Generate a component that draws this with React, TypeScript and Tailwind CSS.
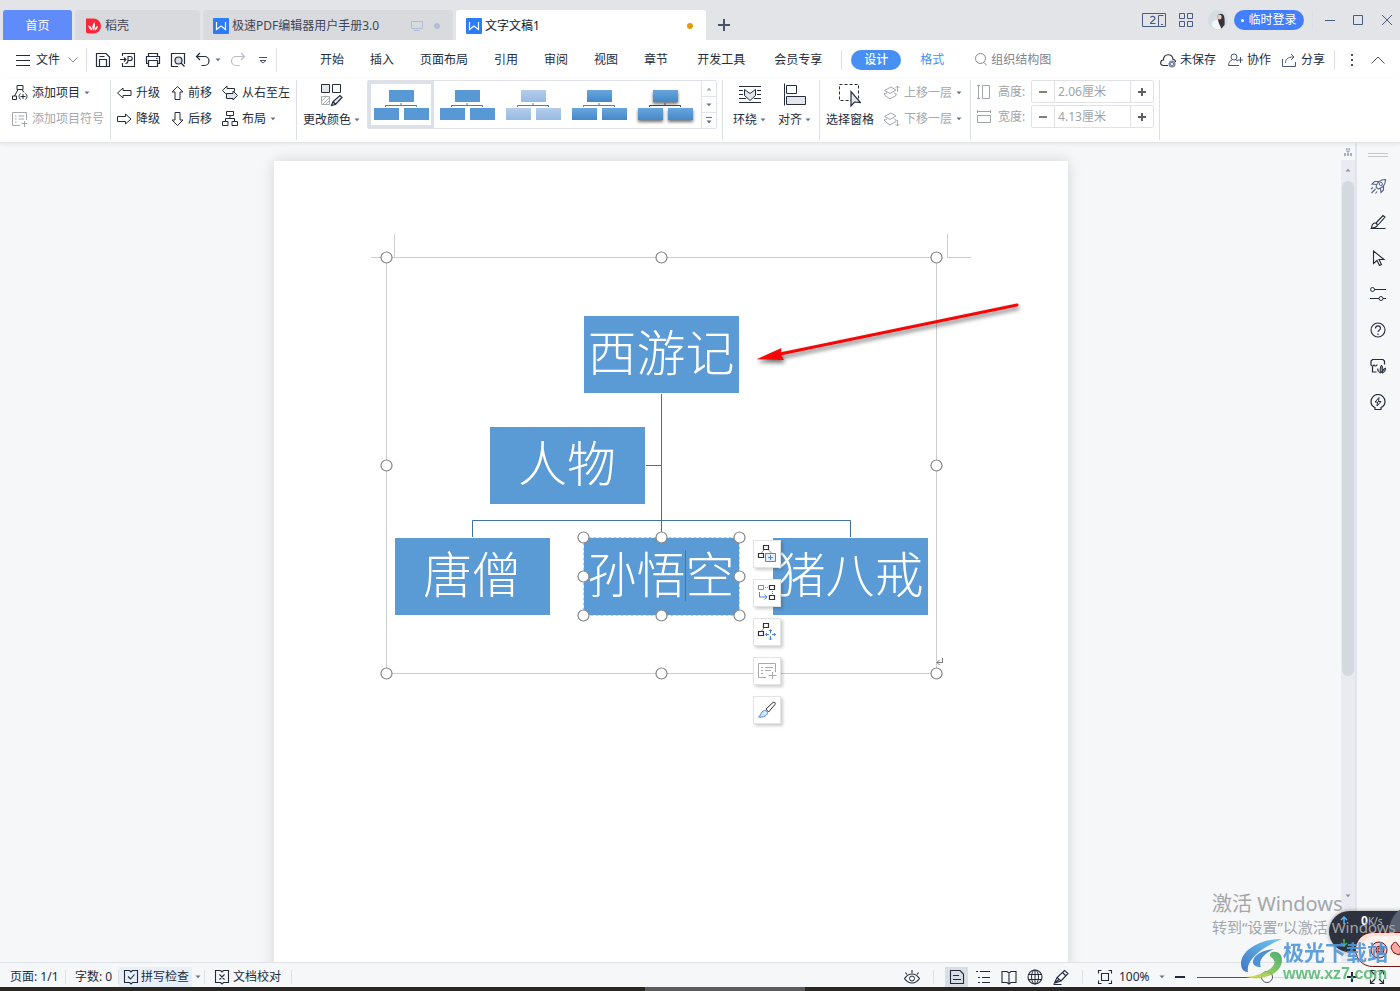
import { useState } from "react"
import type { ReactNode } from "react"

interface SvgProps {
  w?: number
  h?: number
  className?: string
  children: ReactNode
}

function Svg({ w = 16, h = 16, className = "", children }: SvgProps) {
  return (
    <svg width={w} height={h} viewBox={`0 0 ${w} ${h}`} fill="none" stroke="currentColor" className={`shrink-0 ${className}`} aria-hidden="true">
      {children}
    </svg>
  )
}

function Caret({ className = "text-[#66708a]" }: { className?: string }) {
  return (
    <Svg w={6} h={4} className={className}>
      <path d="M0.5 0.5h5L3 3.3z" fill="currentColor" stroke="none" />
    </Svg>
  )
}

function Divider({ className = "h-5" }: { className?: string }) {
  return <div className={`w-px shrink-0 bg-[#dcdfe6] ${className}`} />
}

function WriterLogo() {
  return (
    <Svg className="text-white">
      <rect width="16" height="16" rx="1" fill="#2b7cf6" stroke="none" />
      <path d="M3.500 4v7.500l4.500-3.500 4.500 3.500V4" strokeWidth="1.200" />
    </Svg>
  )
}

/* ---------- title bar ---------- */

function TitleBar() {
  return (
    <header className="flex h-10 shrink-0 items-center bg-[#e2e4e8] pl-[3px] pr-2">
      <div className="flex h-full items-end gap-[3px]">
        <button className="h-[30px] w-[69px] rounded-t-[3px] bg-[#5f8cfa] pt-[2px] text-white">首页</button>
        <button className="flex h-[30px] w-[125px] items-center gap-1 rounded-t-[3px] bg-[#d9dade] pl-[10px] pt-[2px] text-[#3e4656]">
          <Svg>
            <path d="M1 0.5h7.5a7.5 7.5 0 0 1 0 15H3a2 2 0 0 1-2-2z" fill="#fb2638" stroke="none" />
            <path d="M8.500 12.500c-2-2.500-1.500-5.500.8-8.500 1.200 3 1 6-.8 8.500zM7.300 12.500C5 12 3.500 10 3.400 7.300c2.100.700 3.600 2.500 3.900 5.200zM9.600 12.500c.2-2.300 1.300-4 3.200-4.700.1 2.400-1.100 4.300-3.200 4.700z" fill="#fff" stroke="none" />
          </Svg>
          稻壳
        </button>
        <button className="flex h-[30px] w-[250px] items-center gap-[3px] rounded-t-[3px] bg-[#d9dade] pl-[10px] pr-[13px] pt-[2px] text-[#3e4656]">
          <WriterLogo />
          <span className="mr-auto">极速PDF编辑器用户手册3.0</span>
          <Svg w={12} h={12} className="mr-2 text-[#b3bdd4]">
            <path d="M0.500 1.500h11v7h-11zM6 8.500v2M3 10.500h6" />
          </Svg>
          <span className="size-[6px] rounded-full bg-[#b3bdd4]" />
        </button>
        <button className="flex h-[30px] w-[250px] items-center gap-[3px] rounded-t-[3px] bg-white pl-[10px] pr-[13px] pt-[2px] text-[#111827]">
          <WriterLogo />
          <span className="mr-auto">文字文稿1</span>
          <span className="size-[6px] rounded-full bg-[#e59a0c]" />
        </button>
      </div>
      <button aria-label="新建" className="ml-3 mt-[10px] text-[#4a5468]">
        <Svg w={12} h={12}>
          <path d="M6 0v12M0 6h12" strokeWidth="2" />
        </Svg>
      </button>

      <div className="ml-auto flex items-center text-[#4b5c82]">
        <button aria-label="窗口布局">
          <Svg w={24} h={14}>
            <path d="M0.500 0.500h23v13h-23zM16.500 13.500v-11h5M19 11.500h2" />
            <path d="M8.500 4.500c.5-1.700 4.500-1.700 4.500.700 0 2-4.500 3.600-4.500 5.300h5" strokeWidth="1.200" />
          </Svg>
        </button>
        <button aria-label="应用" className="ml-[13px]">
          <Svg w={14} h={14}>
            <path d="M0.500 0.500h5v5h-5zM8.500 0.500h5v5h-5zM0.500 8.500h5v5h-5zM8.500 8.500h5v5h-5z" />
          </Svg>
        </button>
        <Svg w={20} h={20} className="ml-[15px]">
          <circle cx="10" cy="10" r="10" fill="#d3dde2" stroke="none" />
          <path d="M9.500 6c1-3 5.500-3 6.500 0 .800 3 .700 6 .500 9l-3 3.500-3-6z" fill="#3a3238" stroke="none" />
          <ellipse cx="11.500" cy="7" rx="2.200" ry="2.600" fill="#e9cbbd" stroke="none" />
          <path d="M3.500 14c1-3 3.500-4.500 6-4l3 8.200c-3 2-7.500 1-9-4.200z" fill="#f4f8f8" stroke="none" />
        </Svg>
        <button className="ml-[6px] flex h-5 w-[70px] items-center justify-center gap-1 rounded-full bg-[#437ffa] text-white">
          <span className="size-[3px] rounded-full bg-white" />
          临时登录
        </button>
        <Divider className="ml-2 h-5 bg-[#c5c9d1]" />
        <button aria-label="最小化" className="ml-3">
          <Svg w={10} h={10}><path d="M0 5.500h10" /></Svg>
        </button>
        <button aria-label="最大化" className="ml-[18px]">
          <Svg w={10} h={10}><path d="M0.500 0.500h9v9h-9z" /></Svg>
        </button>
        <button aria-label="关闭" className="ml-[19px]">
          <Svg w={10} h={10}><path d="M0 0l10 10M10 0L0 10" /></Svg>
        </button>
      </div>
    </header>
  )
}

/* ---------- menu row ---------- */

const mainMenus = ["开始", "插入", "页面布局", "引用", "审阅", "视图", "章节"]

function MenuRow() {
  return (
    <div className="flex h-[39px] shrink-0 items-center bg-white pl-4 pr-[15px] whitespace-nowrap">
      <button className="flex items-center gap-[6px]">
        <Svg w={14} h={12}><path d="M0 1.500h14M0 6.500h14M0 11.500h14" /></Svg>
        文件
        <Svg w={10} h={6} className="ml-[2px] text-[#8a90a0]"><path d="M0.500 0.500L5 5l4.500-4.500" /></Svg>
      </button>
      <Divider className="ml-2 h-6" />
      <div className="ml-2 flex items-center gap-[9px]">
        <button aria-label="保存">
          <Svg><path d="M1.500 1.500h9.500l3.500 3.500v9.500h-13zM4.500 14v-6.500h7V14M4.500 4.500h5" strokeWidth="1.200" /></Svg>
        </button>
        <button aria-label="输出为PDF">
          <Svg><path d="M2.500 4V1.500h12v13h-12V11M0 7.500h6M4 5.500l2 2-2 2M5.500 11.500c1.500 0 2.500-1 2.500-3V4.500h2c3 0 3 4 0 4H8" strokeWidth="1.100" /></Svg>
        </button>
        <button aria-label="打印">
          <Svg><path d="M3.500 4.500v-3h9v3M3.500 11.500h-2v-7h13v7h-2M3.500 8.500h9v6h-9zM11 6.500h1.500" strokeWidth="1.200" /></Svg>
        </button>
        <button aria-label="打印预览">
          <Svg>
            <path d="M8 14.500H1.500v-13h13V12" strokeWidth="1.200" />
            <circle cx="8.500" cy="8.500" r="3.500" fill="#d9dce3" strokeWidth="1.200" />
            <path d="M11 11l3.500 3.500" strokeWidth="1.200" />
          </Svg>
        </button>
        <button aria-label="撤销" className="flex items-center gap-1">
          <Svg><path d="M5 1L1.500 4.500 5 8M1.500 4.500H9.500a4.500 4.500 0 0 1 0 9H6.500" strokeWidth="1.200" /></Svg>
          <Caret />
        </button>
        <button aria-label="恢复" className="text-[#b9bdc6]">
          <Svg><path d="M11 1l3.500 3.500L11 8M14.500 4.500H6a4.500 4.500 0 0 0 0 9H9.500" strokeWidth="1.200" /></Svg>
        </button>
        <button aria-label="自定义" className="ml-1 text-[#4d5466]">
          <Svg w={8} h={8}><path d="M0 1.500h8M1 4.500h6L4 7z" /></Svg>
        </button>
      </div>
      <Divider className="ml-[9px] h-6" />

      <nav className="ml-[43px] flex items-center gap-[29px]">
        <div className="flex gap-[26px]">
          {mainMenus.map((name) => (
            <button key={name}>{name}</button>
          ))}
        </div>
        <button>开发工具</button>
        <button>会员专享</button>
      </nav>
      <Divider className="ml-[19px] h-5" />
      <button className="ml-[9px] h-5 w-[50px] rounded-full bg-[#478ef5] font-medium text-white">设计</button>
      <button className="ml-[19px] text-[#478ef5]">格式</button>
      <label className="ml-[31px] flex items-center gap-1 text-[#8089a0]">
        <Svg w={12} h={13}><circle cx="5.500" cy="5.500" r="5" /><path d="M9 9.500l3 3" /></Svg>
        <input aria-label="搜索命令" defaultValue="组织结构图" className="w-20 bg-transparent text-[#7d8594] outline-none" />
      </label>

      <div className="ml-auto flex items-center">
        <button className="flex items-center gap-1">
          <Svg>
            <path d="M8 13.500H3.500c-4 0-3.500-5.500 0-5.500 0-7 9.500-7 9.500-.500 1.500 0 2.500 1 2.500 2.500" strokeWidth="1.100" />
            <circle cx="12" cy="12" r="3.500" fill="#7c869e" stroke="none" />
            <path d="M10.700 10.700l2.600 2.600M13.300 10.700l-2.600 2.600" stroke="#fff" strokeWidth="0.800" />
          </Svg>
          未保存
        </button>
        <button className="ml-3 flex items-center gap-1">
          <Svg w={15} h={14} className="text-[#4d5872]">
            <circle cx="6" cy="4" r="3" />
            <path d="M4 7C1.500 8 0.500 10 0.500 12.500H11M8 7l2 1M12.500 4v6M9.500 7h5.500" />
          </Svg>
          协作
        </button>
        <button className="ml-[11px] flex items-center gap-1">
          <Svg w={15} h={14} className="text-[#4d5872]">
            <path d="M0.500 6v7.500h13V9M3.500 10c0-4 2.500-6 7.500-6M9 1l3 3-3 3" />
          </Svg>
          分享
        </button>
        <Divider className="ml-[9px] h-5" />
        <button aria-label="更多" className="ml-4 text-[#4d5466]">
          <Svg w={2} h={12}><path d="M0 1h2M0 6h2M0 11h2" strokeWidth="2" /></Svg>
        </button>
        <button aria-label="收起功能区" className="ml-[18px] text-[#4d5466]">
          <Svg w={14} h={8}><path d="M0.500 7.500L7 1l6.500 6.500" /></Svg>
        </button>
      </div>
    </div>
  )
}

/* ---------- ribbon ---------- */

function RibbonRow({ icon, label, menu = false, muted = false }: { icon: ReactNode; label: string; menu?: boolean; muted?: boolean }) {
  return (
    <button disabled={muted} className={`flex h-[26px] items-center gap-1 ${muted ? "text-[#a5a8ae]" : ""}`}>
      {icon}
      <span>{label}</span>
      {menu && <Caret />}
    </button>
  )
}

function RibbonTall({ icon, label, menu = false }: { icon: ReactNode; label: string; menu?: boolean }) {
  return (
    <button className="flex h-[52px] flex-col items-center justify-between pt-[3px]">
      {icon}
      <span className="flex h-6 items-center gap-[3px]">
        {label}
        {menu && <Caret />}
      </span>
    </button>
  )
}

const styleFills = [
  { top: "bg-[#5898d5]", shade: "", line: "text-[#4480b3]" },
  { top: "bg-[#5898d5]", shade: "", line: "text-[#4480b3]" },
  { top: "bg-linear-to-b from-[#b4cdea] to-[#97b9e2]", shade: "", line: "text-[#4480b3]" },
  { top: "bg-linear-to-b from-[#68a5dd] to-[#4489c9]", shade: "", line: "text-[#4480b3]" },
  { top: "bg-linear-to-b from-[#68a5dd] to-[#4489c9]", shade: "shadow-[0_2px_3px_rgba(0,0,0,0.55)]", line: "text-[#33475c]" },
]

function StyleGallery() {
  const [picked, setPicked] = useState(0)
  return (
    <div className="flex h-[49px] rounded-[2px] border border-[#dfe1e6]">
      {styleFills.map((s, i) => (
        <button
          key={i}
          aria-label={`样式${i + 1}`}
          onClick={() => setPicked(i)}
          className={`flex w-[66px] flex-col items-center justify-center border-[3px] ${picked === i ? "border-[#dbe1e6]" : "border-transparent"}`}
        >
          <span className={`h-3 w-[25px] ${s.top} ${s.shade}`} />
          <Svg w={34} h={6} className={s.line}><path d="M17 1v3M1.500 5V3.500h31V5" /></Svg>
          <span className="flex gap-[5px]">
            <span className={`h-3 w-[25px] ${s.top} ${s.shade}`} />
            <span className={`h-3 w-[25px] ${s.top} ${s.shade}`} />
          </span>
        </button>
      ))}
      <div className="ml-[3px] flex w-[15px] flex-col divide-y divide-[#dfe1e6] border-l border-[#dfe1e6]">
        <button aria-label="上一行" className="flex flex-1 items-center justify-center">
          <Caret className="rotate-180 text-[#9aa1b0]" />
        </button>
        <button aria-label="下一行" className="flex flex-1 items-center justify-center"><Caret /></button>
        <button aria-label="展开" className="flex flex-1 items-center justify-center">
          <Svg w={6} h={7} className="text-[#66708a]"><path d="M0 0.500h6" /><path d="M0.500 3.500h5L3 6.500z" fill="currentColor" stroke="none" /></Svg>
        </button>
      </div>
    </div>
  )
}

function SizeField({ icon, label, value }: { icon: ReactNode; label: string; value: string }) {
  return (
    <div className="flex h-[23px] items-center text-[#a0a3a9]">
      {icon}
      <label className="ml-[7px] flex items-center">
        <span className="w-[33px]">{label}:</span>
        <span className="flex h-[23px] w-[123px] rounded-[2px] border border-[#e0e2e7]">
          <button aria-label={`减小${label}`} className="flex w-[22px] items-center justify-center text-[#808080]">
            <Svg w={8} h={8}><path d="M0 4h8" strokeWidth="2" /></Svg>
          </button>
          <input defaultValue={value} className="w-[77px] border-x border-[#e0e2e7] bg-white px-[3px] outline-none" />
          <button aria-label={`增大${label}`} className="flex flex-1 items-center justify-center text-[#606060]">
            <Svg w={8} h={8}><path d="M0 4h8M4 0v8" strokeWidth="2" /></Svg>
          </button>
        </span>
      </label>
    </div>
  )
}

function Layers({ up }: { up: boolean }) {
  return (
    <Svg>
      <path d="M0.500 5.500L7 2l5 3-6 3.500zM0.500 8v2l5.500 4 6-3.500V8.500M0.500 9.500l3-2M12 9.500l-2-2" />
      <path d={up ? "M13.500 7V1M11.500 3l2-2 2 2" : "M13.500 9v6M11.500 13l2 2 2-2"} />
    </Svg>
  )
}

function Ribbon() {
  return (
    <div className="relative z-10 flex h-16 shrink-0 items-start border-b border-[#e3e5e9] bg-white pl-3 pt-px whitespace-nowrap shadow-[0_1px_4px_rgba(0,0,0,0.08)]">
      <div className="flex w-[98px] flex-col items-start">
        <RibbonRow
          label="添加项目"
          menu
          icon={<Svg><path d="M5 0.500h6v4H5zM0.500 11h4v3.500h-4zM6 4.500L2.500 11M10 4.500l2 3M8.500 8.500c-2 2-2 4 0 6M13.500 8.500c2 2 2 4 0 6M8.500 11.500h5M11 9v5" /></Svg>}
        />
        <RibbonRow
          label="添加项目符号"
          muted
          icon={<Svg><path d="M8 14.500H0.500v-13h14V9M3 5h1.500M3 8h1.500M3 11h1.500M6.500 5H12M6.500 8H12M12.500 10v6M9.500 12.500h6" /></Svg>}
        />
      </div>
      <Divider className="h-[60px]" />

      <div className="flex w-[185px] pl-[6px]">
        <div className="flex w-[54px] flex-col items-start">
          <RibbonRow label="升级" icon={<Svg w={15} h={14}><path d="M0.500 7L6 2v2.500h8v5H6V12z" /></Svg>} />
          <RibbonRow label="降级" icon={<Svg w={15} h={14}><path d="M14 7L8.500 2v2.500h-8v5h8V12z" /></Svg>} />
        </div>
        <div className="flex w-[51px] flex-col items-start">
          <RibbonRow label="前移" icon={<Svg w={13} h={14}><path d="M6.500 0.500L1 6h3v7.500h5V6h3z" /></Svg>} />
          <RibbonRow label="后移" icon={<Svg w={13} h={14}><path d="M6.500 13.500L1 8h3V0.500h5V8h3z" /></Svg>} />
        </div>
        <div className="flex flex-col items-start">
          <RibbonRow
            label="从右至左"
            icon={
              <Svg>
                <path d="M4.500 9.500L0.500 5.500 5 1v2.500h7.500v3" />
                <path d="M15.500 10.500L11 6v2.500H4.500v5H11V15z" fill="#e1e4e9" />
              </Svg>
            }
          />
          <RibbonRow
            label="布局"
            menu
            icon={<Svg><path d="M4.500 0.500h7v4h-7zM0.500 10.500h5.500v4H0.500zM10 10.500h5.500v4H10zM8 4.500v3M3.500 10.500v-3h9v3" /></Svg>}
          />
        </div>
      </div>
      <Divider className="h-[60px]" />

      <div className="ml-[6px]">
        <RibbonTall
          label="更改颜色"
          menu
          icon={
            <Svg w={22} h={24}>
              <path d="M0.500 1.500h8v8h-8z" fill="#e4e6ea" />
              <path d="M11.500 1.500h8v8h-8z" />
              <path d="M0.500 13.500h8v8h-8zM1 18l4-4M2 21l6-6M5 21l3-3" stroke="#aaa" />
              <path d="M10.500 22.500l1.500-4 7-6 2 2-6.500 7zM12 18.500l2.500 3" fill="#e4e6ea" strokeWidth="1.200" />
            </Svg>
          }
        />
      </div>
      <div className="ml-[7px]">
        <StyleGallery />
      </div>
      <Divider className="ml-[5px] h-[60px]" />

      <div className="flex gap-3 pl-[10px] pr-2">
        <RibbonTall
          label="环绕"
          menu
          icon={
            <Svg w={22} h={24}>
              <path d="M0 3.500h22M0 19.500h22M0 7.500h4M18 7.500h4M0 11.500h4M18 11.500h4M0 15.500h7M15 15.500h7" />
              <path d="M5.500 6.500l5.500 4 5.500-4v6L11 17.500l-5.500-5z" fill="#e4e6ea" />
            </Svg>
          }
        />
        <RibbonTall
          label="对齐"
          menu
          icon={
            <Svg w={22} h={24}>
              <path d="M0.500 0.500v22M2.500 2.500h10v8h-10z" />
              <path d="M2.500 13.500h19v8h-19z" fill="#e4e6ea" />
            </Svg>
          }
        />
      </div>
      <Divider className="h-[60px]" />
      <div className="flex gap-[10px] pl-[6px] pr-2">
        <RibbonTall
          label="选择窗格"
          icon={
            <Svg w={22} h={24}>
              <path d="M0.500 1.500h19v16h-19z" strokeDasharray="3 2" />
              <path d="M12 8.500V23l3.500-4 6 .500z" fill="#e4e6ea" strokeWidth="1.200" />
            </Svg>
          }
        />
        <div className="flex flex-col items-start">
          <RibbonRow label="上移一层" menu muted icon={<Layers up />} />
          <RibbonRow label="下移一层" menu muted icon={<Layers up={false} />} />
        </div>
      </div>
      <Divider className="h-[60px]" />
      <div className="flex flex-col gap-[2px] pl-[6px] pr-[5px]">
        <SizeField label="高度" value="2.06厘米" icon={<Svg w={14} h={14}><path d="M1.500 0.500v13M0 0.500h3M0 13.500h3M5.500 0.500h7v13h-7z" /></Svg>} />
        <SizeField label="宽度" value="4.13厘米" icon={<Svg w={14} h={14}><path d="M0.500 1.500h13M0.500 0v3M13.500 0v3M0.500 5.500h13v7h-13z" /></Svg>} />
      </div>
      <Divider className="h-[60px]" />
    </div>
  )
}

/* ---------- document ---------- */

function ChartNode({ text, place }: { text: string; place: string }) {
  return (
    <div className={`absolute flex h-[77px] w-[155px] items-center justify-center bg-[#5b9bd5] pb-1 text-[49px] font-light whitespace-nowrap text-white ${place}`}>
      {text}
    </div>
  )
}

const frameHandles = [[0, 0], [275, 0], [550, 0], [0, 208], [550, 208], [0, 416], [275, 416], [550, 416]]
const nodeHandles = [[197, 280], [275, 280], [353, 280], [197, 319], [353, 319], [197, 358], [275, 358], [353, 358]]

const floatTools = [
  {
    name: "添加项目",
    icon: <><path d="M6.500 1.500h5v4h-5zM1.500 9.500h5v4h-5z" strokeWidth="1.200" /><path d="M7 6L4.500 9M11.500 6l3 3" stroke="#888" /><path d="M8.500 9.500h10v8h-10zM11 13.500h5M13.500 11v5" stroke="#4d83dd" fill="#e3edfb" /></>,
  },
  {
    name: "更改布局",
    icon: <><path d="M1.500 2.500h5v4h-5z" stroke="#888" /><path d="M12.500 2.500h5v4h-5zM12.500 12.500h5v4h-5z" strokeWidth="1.200" /><path d="M8 4.500h4M15.500 8v4" stroke="#888" strokeDasharray="1 1" /><path d="M2.500 9v5h7M7.500 11.500L10 14l-2.500 2.500" stroke="#4d83dd" /></>,
  },
  {
    name: "更改位置",
    icon: <><path d="M6.500 1.500h5v4h-5zM1.500 9.500h5v4h-5z" strokeWidth="1.200" /><path d="M7 6L4.500 9" stroke="#888" /><path d="M8.500 12.500H12M15 12.500h4M13.500 7.500V11M13.500 14v4M10 11l-1.500 1.500L10 14M17 11l1.500 1.500L17 14M12 9l1.500-1.500L15 9M12 16.500l1.500 1.500 1.500-1.500" stroke="#4d83dd" /></>,
  },
  {
    name: "添加项目符号",
    icon: <path d="M9 16.500H1.500v-14h17V11M4 6.500h2M4 9.500h2M4 12.500h2M8 6.500h8M8 9.500h6M15.500 11v7M11.500 14.500h8" stroke="#aaa" />,
  },
  {
    name: "形状样式",
    icon: <><path d="M9 9l7-6.500c1.500-1 3 .500 2 2L11.500 12z" /><path d="M1.500 17c2-1 2-3 3.500-5s3.500-2 5-.500 0 3.500-2 4.500-4.500 1.500-6.500 1z" stroke="#4d83dd" fill="#d7e5fa" /></>,
  },
]

function OrgChart() {
  return (
    <div className="relative h-[416px] w-[550px]">
      {/* connectors, margin marks */}
      <svg className="absolute inset-0 overflow-visible" width="550" height="416" fill="none" aria-hidden="true">
        <path d="M-15 0.500H550.500V416.500H0.500V0.500M8.500 0V-23M561.500-23V0.500H585" stroke="#cccdd0" />
        <path d="M275.500 137V281M260 208.500h15M86.500 280V263.500h378V280" stroke="#41719c" />
      </svg>
      <ChartNode text="西游记" place="left-[198px] top-[59px]" />
      <ChartNode text="人物" place="left-[104px] top-[170px]" />
      <ChartNode text="唐僧" place="left-[9px] top-[281px]" />
      <ChartNode text="孙悟空" place="left-[198px] top-[281px]" />
      <ChartNode text="猪八戒" place="left-[387px] top-[281px]" />

      {/* selection handles, caret and pointer arrow */}
      <svg className="absolute inset-0 overflow-visible" width="550" height="416" fill="none" aria-hidden="true">
        <path d="M197.500 280.500h156v78h-156z" stroke="#b9cfe4" strokeDasharray="3 2" />
        <path d="M299.500 293v51" stroke="#7f6a52" />
        {[...frameHandles, ...nodeHandles].map(([x, y]) => (
          <circle key={`${x}-${y}`} cx={x + 0.5} cy={y + 0.5} r="5.500" fill="#fff" stroke="#858585" strokeWidth="1.200" />
        ))}
        <path d="M556.500 401v4.500H551M553.500 403l-2.500 2.500 2.500 2.500" stroke="#777" />
        <g className="drop-shadow-[1px_3px_2px_rgba(0,0,0,0.55)]">
          <path d="M394 97L631 48" stroke="#f60606" strokeWidth="3" strokeLinecap="round" />
          <path d="M370.500 102.300L395.500 91l-1 6 3.500 6z" fill="#f60606" />
        </g>
      </svg>

      <div className="absolute left-[367px] top-[283px] flex flex-col gap-[11px]">
        {floatTools.map((tool) => (
          <button key={tool.name} aria-label={tool.name} className="flex size-7 items-center justify-center border border-[#e2e3e5] bg-white shadow-[2px_2px_3px_rgba(0,0,0,0.2)]">
            <Svg w={20} h={20} className="text-[#333]">{tool.icon}</Svg>
          </button>
        ))}
      </div>
    </div>
  )
}

const sideTools = [
  { name: "快捷", tone: "text-[#566388]", icon: <><path d="M6 9c1-4.500 4-7.500 9.500-7.500 0 5.500-3 8.500-7.500 9.500zM6.500 6.500L2 6l2.500-2.500H9M10.500 10.500l.500 4 2.500-2.500V8.500M1 11l2-1.500M1.500 15l4-4M5.500 15.500l1.500-2" strokeWidth="1.100" /><circle cx="10.800" cy="5.900" r="1.600" /></> },
  { name: "样式", tone: "", icon: <path d="M0.500 14.500h15M1.500 14c.500-4 2.500-6 5-4.500 2 2 0 4.500-5 4.500zM6 9l7-7.500L15 3 8 11" strokeWidth="1.100" /> },
  { name: "选择", tone: "", icon: <path d="M3.500 1v12.500l3.500-3 2.500 5 2-1-2.500-5H14z" strokeWidth="1.100" /> },
  { name: "设置", tone: "", icon: <><path d="M4.500 3.500H16M0 12.500h9M13 12.500h3" strokeWidth="1.200" /><circle cx="2.500" cy="3.500" r="2" /><circle cx="11" cy="12.500" r="2" /></> },
  { name: "帮助", tone: "", icon: <><circle cx="8" cy="8" r="7" strokeWidth="1.100" /><path d="M5.500 6.500c0-3.500 5-3.500 5 0C10.500 8 8 8 8 10M8 11.500V13" strokeWidth="1.100" /></> },
  { name: "素材", tone: "", icon: <><path d="M1 6.500V3l1.500-1.500h10.500L14.500 3v3.500M1 6.500c0 2 3 2 3 0 0 2 3 2 3 0M2.500 8v6h4" strokeWidth="1.200" /><path d="M11.500 15c-2-2.500-1.500-5.500 0-8 1.500 2.500 2 5.500 0 8zM11 15c-2.500 0-3.500-2.500-3.300-4.500M12 15c2.500 0 3.500-2.500 3.500-5-2 1-3.500 3-3.500 5" fill="#8b92a3" /></> },
  { name: "灵感", tone: "", icon: <><path d="M5 13.500C2.500 12.500 1 10.500 1 7.500a7 7 0 0 1 14 0c0 3-1.500 5-4 6v2H5z" strokeWidth="1.200" /><path d="M9 3.500L5 8h2.500L7 12l4-4.500H8.500z" /></> },
]

function Workspace() {
  return (
    <main className="flex min-h-0 flex-1 bg-[#f5f7f9]">
      <div className="min-w-0 flex-1 overflow-hidden pt-[18px]">
        {/* A4 page */}
        <div className="mx-auto h-[1123px] w-[794px] bg-white pl-28 pt-24 shadow-[0_0_14px_rgba(0,0,0,0.14)]">
          <OrgChart />
        </div>
      </div>
      <div className="flex w-[14px] shrink-0 flex-col items-center bg-[#e9ebf1]">
        <div className="flex h-[17px] w-full items-center justify-center bg-[#f5f7f9] text-[#a4adc1]">
          <Svg w={8} h={8}><path d="M2 1h4" strokeWidth="2" strokeDasharray="1 0.500" /><path d="M1.500 2.500h5L4 5zM0 5h2v3H0zM3 5h2v3H3zM6 5h2v3H6z" fill="currentColor" stroke="none" /></Svg>
        </div>
        <div className="flex h-[21px] items-center pb-[2px]"><Caret className="rotate-180 text-[#8791ab]" /></div>
        <div className="h-[495px] w-3 rounded-full bg-[#d4d8df]" />
        <div className="mt-auto pb-16"><Caret className="text-[#8791ab]" /></div>
      </div>
      <aside className="flex w-[45px] shrink-0 flex-col items-center border-l-2 border-[#e2e4ec] pt-[10px] pr-[2px]">
        <div className="h-1 w-5 border-y border-[#c5c8cd]" />
        <div className="mt-[21px] flex flex-col gap-5">
          {sideTools.map((tool) => (
            <button key={tool.name} aria-label={tool.name} className={tool.tone}>
              <Svg>{tool.icon}</Svg>
            </button>
          ))}
        </div>
      </aside>
    </main>
  )
}

/* ---------- status bar ---------- */

const viewModes = [
  { name: "页面视图", icon: <path d="M1.500 1.500h9.500l3.500 3.500v9.500h-13zM4 6.500h6M4 10.500h8" strokeWidth="1.100" /> },
  { name: "大纲", icon: <path d="M1 2.500h2M5 2.500h10M3 8.500h2M7 8.500h8M3 13.500h2M7 13.500h8" strokeWidth="1.100" /> },
  { name: "阅读版式", icon: <path d="M1 2.500h5l2 1.500 2-1.500h5v11h-5l-2 1.500-2-1.500H1zM8 4v11" strokeWidth="1.100" /> },
  { name: "Web版式", icon: <><circle cx="8" cy="8" r="7" strokeWidth="1.100" /><ellipse cx="8" cy="8" rx="3.500" ry="7" /><path d="M1.500 5.500h13M1.500 10.500h13M8 1v14" /></> },
  { name: "写作模式", icon: <path d="M0.500 15.500h8M1.500 14L4 8.500l7.500-7L15 4.500 8 12zM4 8.500L8 12M9.500 3.500l3 3M2 13.500l4-3" strokeWidth="1.100" /> },
]

function StatusBar() {
  const [zoom, setZoom] = useState(50)
  return (
    <footer className="flex h-[25px] shrink-0 items-center border-t border-[#dfe2e6] bg-[#f5f7f9] pl-[10px] pt-1 pr-[15px] whitespace-nowrap">
      <span className="w-[55px]">页面: 1/1</span>
      <Divider className="h-[14px]" />
      <span className="ml-[9px] w-[43px]">字数: 0</span>
      <Divider className="h-[14px]" />
      <button className="flex h-[21px] items-center gap-[2px] bg-[#e7eff9] pl-1 pr-[3px]">
        <Svg><path d="M6.500 1.500h-5v12h5L8 15l1.500-1.500h5v-12h-5L8 3 6.500 1.500M5 7.500L7.500 10l4-4.500" strokeWidth="1.100" /></Svg>
        拼写检查
      </button>
      <button aria-label="拼写选项" className="px-[3px]"><Caret /></button>
      <Divider className="h-[14px]" />
      <button className="ml-[9px] flex items-center gap-[3px]">
        <Svg><path d="M6.500 1.500h-5v12h5L8 15l1.500-1.500h5v-12h-5L8 3 6.500 1.500M5.500 5.500l5 5M10.500 5.500l-5 5" strokeWidth="1.100" /></Svg>
        文档校对
      </button>
      <Divider className="ml-[10px] h-[14px]" />

      <div className="ml-auto flex items-center">
        <button aria-label="护眼模式">
          <Svg>
            <path d="M0.500 9.500c4-6 11-6 15 0-4 6-11 6-15 0zM1.500 3.500l1.500 2M8 1v3M14.500 3.500l-1.500 2" strokeWidth="1.100" />
            <circle cx="8" cy="9.500" r="2.500" />
          </Svg>
        </button>
        <Divider className="ml-[13px] mr-[11px] h-[14px]" />
        <div className="flex gap-[3px]">
          {viewModes.map((mode, i) => (
            <button key={mode.name} aria-label={mode.name} className={`flex h-[21px] w-[23px] items-center justify-center ${i === 0 ? "bg-[#d9dde4]" : ""}`}>
              <Svg>{mode.icon}</Svg>
            </button>
          ))}
        </div>
        <Divider className="ml-[10px] mr-[14px] h-[14px]" />
        <button aria-label="最佳显示比例">
          <Svg><path d="M1.500 4.500v-3h3M11.500 1.500h3v3M14.500 11.500v3h-3M4.500 14.500h-3v-3M4.500 4.500h7v7h-7z" strokeWidth="1.100" /></Svg>
        </button>
        <button className="ml-[6px] flex w-[46px] items-center justify-between">100% <Caret /></button>
        <button aria-label="缩小" className="ml-[10px]">
          <Svg w={10} h={10}><path d="M0 5h10" strokeWidth="2" /></Svg>
        </button>
        <input
          type="range"
          aria-label="显示比例"
          value={zoom}
          onChange={(e) => setZoom(Number(e.target.value))}
          className="ml-3 h-3 w-[140px] appearance-none bg-[linear-gradient(to_right,#4a5268_50%,#d5d8de_50%)] bg-[length:100%_1px] bg-center bg-no-repeat [&::-webkit-slider-thumb]:size-3 [&::-webkit-slider-thumb]:appearance-none [&::-webkit-slider-thumb]:rounded-full [&::-webkit-slider-thumb]:border [&::-webkit-slider-thumb]:border-[#555] [&::-webkit-slider-thumb]:bg-white"
        />
        <button aria-label="放大" className="ml-[10px]">
          <Svg w={10} h={10}><path d="M0 5h10M5 0v10" strokeWidth="2" /></Svg>
        </button>
        <button aria-label="全屏" className="ml-3">
          <Svg><path d="M1.500 5.500v-4h4M10.500 1.500h4v4M14.500 10.500v4h-4M5.500 14.500h-4v-4M1.500 1.500L6 6M14.500 1.500L10 6M14.500 14.500L10 10M1.500 14.500L6 10" strokeWidth="1.100" /></Svg>
        </button>
      </div>
    </footer>
  )
}

/* widgets floating above the window */
function DesktopOverlays() {
  return (
    <div className="pointer-events-none absolute bottom-0 right-0 z-20 h-[101px] w-[188px] overflow-hidden">
      <div className="absolute left-[117px] top-[21px] h-[41px] w-24 rounded-full bg-[#2d323e] text-[10px] text-[#b8bcc4] shadow-[0_0_4px_rgba(0,0,0,0.4)]">
        <Svg w={8} h={34} className="absolute left-[11px] top-1">
          <path d="M4 9V2M1 5l3-3 3 3" stroke="#4fb4f0" strokeWidth="1.500" />
          <path d="M4 24v7M1 28l3 3 3-3" stroke="#3fc04a" strokeWidth="1.500" />
        </Svg>
        <span className="absolute left-8 top-1 leading-3"><b className="text-xs leading-3 text-white">0</b>K/s</span>
        <span className="absolute left-[60px] top-[-6px] size-[52px] rounded-full bg-[#596173]" />
      </div>
      <div className="absolute left-[143px] top-[52px] h-[35px] w-20 -translate-y-[10px] rounded-full border border-[#6e1414] bg-[#fff3ee] shadow-[inset_3px_3px_0_#fddfd5]">
        <Svg w={50} h={34} className="absolute left-[14px] top-0 text-[#6e1414]">
          <circle cx="9" cy="17" r="8" fill="#f9c5c1" />
          <circle cx="10" cy="17" r="4" fill="#fff" />
          <path d="M8 15h4v4H8zM22 12c2-4 5-3 6 0 3 2 4 6 1 10l-5-2c-2-3-4-5-2-8z" fill="#fca7a2" />
        </Svg>
      </div>
      <div className="absolute left-0 top-0 whitespace-nowrap text-[#a4a6a9]">
        <p className="text-xl leading-[27px]">激活 Windows</p>
        <p className="text-[15px] leading-5">转到“设置”以激活 Windows</p>
      </div>
      <Svg w={48} h={44} className="absolute left-7 top-[48px] opacity-90">
        <defs>
          <linearGradient id="swooshBlue" x1="0" y1="1" x2="1" y2="0">
            <stop offset="0" stopColor="#2c6bc0" />
            <stop offset="1" stopColor="#62c3f2" />
          </linearGradient>
          <linearGradient id="swooshGreen" x1="0" y1="1" x2="1" y2="0">
            <stop offset="0" stopColor="#e6e04a" />
            <stop offset="0.6" stopColor="#6dbd57" />
            <stop offset="1" stopColor="#3fa36b" />
          </linearGradient>
        </defs>
        <path d="M42 1C20 1 1 12 1 26c0 5 3 8 7 8-2-10 8-22 34-33z" fill="url(#swooshBlue)" stroke="none" />
        <path d="M34 11c-14 1-22 8-21 14 1 3 4 4 8 4-3-6 2-13 13-18z" fill="#3d86cf" stroke="none" />
        <path d="M32 14c-3 2-3 4 0 6 4 3 3 7-2 11-6 4-14 7-24 8 18 5 36-4 36-17 0-6-4-9-10-8z" fill="url(#swooshGreen)" stroke="none" />
      </Svg>
      <div className="absolute left-[71px] top-[50px] whitespace-nowrap font-bold opacity-90">
        <p className="text-[21px] leading-6 text-[#4e96d9]">极光下载站</p>
        <p className="font-['Liberation_Sans'] text-base leading-5 text-[#5cb977]">www.xz7.com</p>
      </div>
    </div>
  )
}

export default function App() {
  return (
    <div className="relative flex h-screen flex-col overflow-hidden bg-white font-['Noto_Sans','Noto_Sans_CJK_SC',sans-serif] text-xs text-[#242b3a]">
      <TitleBar />
      <MenuRow />
      <Ribbon />
      <Workspace />
      <StatusBar />
      <div className="flex h-1 shrink-0 justify-center bg-[#292624] pl-[50px]">
        <div className="w-40 bg-[#5c5b5d]" />
      </div>
      <DesktopOverlays />
    </div>
  )
}
